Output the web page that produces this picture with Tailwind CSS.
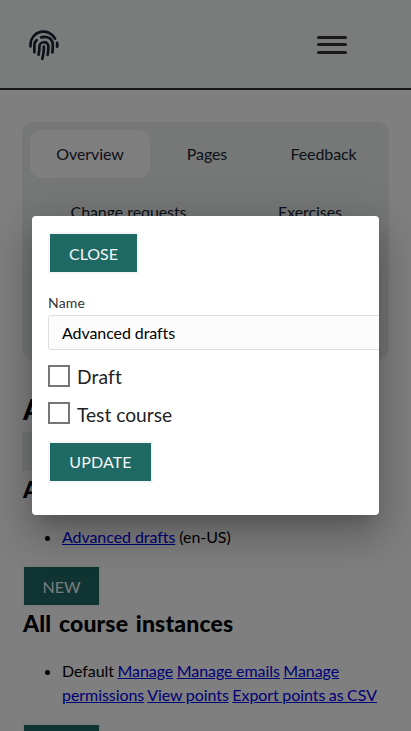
<!DOCTYPE html>
<html lang="en">
<head>
<meta charset="utf-8">
<title>Manage course</title>
<script src="https://cdn.jsdelivr.net/npm/@tailwindcss/browser@4"></script>
</head>
<body class="relative h-[731px] w-[411px] overflow-hidden bg-white font-['Lato',sans-serif] text-base text-black">
<header class="flex h-[90px] items-center justify-between border-b-2 border-[#333] bg-[#f5f6f7] pl-7 pr-16 pt-[2px]">
  <svg class="mt-[2px] h-8 w-8" viewBox="28 30 32 32" fill="none" stroke="#1a2333" stroke-width="2.7" stroke-linecap="round">
    <path d="M30.5 46.5v-2A13 13 0 0 1 55 38.5M57.1 42.8q.4 2 0 3.8M34.4 52.3V45q.1-3 2.3-4.9M41.2 37.4C47.5 35.3 52.8 39 52.8 45.3q0 3.7-.4 7M38.6 54.8q.8-4 .8-8c0-6 9-6.2 9 0q0 4-.7 8M43.9 46.5q.1 6.5-1.6 12.3"/>
  </svg>
  <div class="flex h-[18px] w-[30px] flex-col">
    <span class="h-[3px] rounded-full bg-[#333]"></span>
    <span class="mt-1 h-[3px] rounded-full bg-[#333]"></span>
    <span class="mt-[5px] h-[3px] rounded-full bg-[#333]"></span>
  </div>
</header>
<main class="px-[22px] pt-8">
  <nav class="flex h-[238px] flex-col gap-[10px] rounded-xl bg-[#ebf0ee] p-2 leading-6 tracking-[-0.08px] text-[#1a2333]">
    <div class="flex h-12 gap-[10px]">
      <a class="flex w-[120px] shrink-0 items-center justify-center rounded-xl bg-white">Overview</a>
      <a class="flex w-[94px] shrink-0 items-center justify-center">Pages</a>
      <a class="flex w-[119px] shrink-0 items-center justify-center">Feedback</a>
    </div>
    <div class="flex h-12 gap-[10px]">
      <a class="flex w-[197px] shrink-0 items-center justify-center">Change requests</a>
      <a class="flex w-[146px] shrink-0 items-center justify-center">Exercises</a>
    </div>
  </nav>
  <h1 class="mt-8 h-10 pl-px text-[28px] font-black leading-[34px]">Advanced</h1>
  <div class="h-[39px] w-20 bg-[#ebf0ee]"></div>
  <h2 class="h-[54px] whitespace-nowrap pl-px pt-1 text-[23px] font-black leading-[28px]">All versions</h2>
  <ul class="list-disc pl-10 leading-6 tracking-[-0.07px]">
    <li><a class="text-[#0000ee] underline">Advanced drafts</a> (en-US)</li>
  </ul>
  <button class="mt-4 block h-[42px] w-[79px] border-2 border-[#f5f6f7] bg-[#1f6964] pt-px text-[#f5f6f7]">NEW</button>
  <h2 class="h-[52px] whitespace-nowrap pl-px text-[23px] font-black leading-[32px] tracking-[0.15px] [word-spacing:2px]">All course instances</h2>
  <ul class="list-disc pl-10 leading-6 tracking-[-0.06px] [word-spacing:-0.5px]">
    <li>Default <a class="text-[#0000ee] underline">Manage</a> <a class="text-[#0000ee] underline">Manage emails</a> <a class="text-[#0000ee] underline">Manage permissions</a> <a class="text-[#0000ee] underline">View points</a> <a class="text-[#0000ee] underline">Export points as CSV</a></li>
  </ul>
  <div class="mt-4 h-[42px] w-[79px] border-2 border-[#f5f6f7] bg-[#1f6964]"></div>
</main>
<div class="absolute inset-0 flex items-start bg-black/50 px-8 pt-[216px]">
  <section role="dialog" class="flex h-[299px] w-[347px] flex-col items-start overflow-hidden rounded bg-white p-4 shadow-[0px_11px_15px_-7px_rgba(0,0,0,0.2),0px_24px_38px_3px_rgba(0,0,0,0.14),0px_9px_46px_8px_rgba(0,0,0,0.12)]">
    <button class="h-[42px] w-[91px] shrink-0 border-2 border-[#f5f6f7] bg-[#1f6964] pt-px text-[#f5f6f7]">CLOSE</button>
    <label class="mt-5 h-[21px] text-sm leading-[18px] tracking-[0.2px] text-[#333]">Name</label>
    <input class="h-[35px] w-[400px] shrink-0 rounded-[3px] border border-[#dedede] bg-[#fcfcfc] px-[13px] tracking-[-0.09px]" value="Advanced drafts">
    <label class="mt-[14px] flex h-6 items-center gap-[7px] text-[19.2px] text-[#222]"><span class="mb-px h-[22px] w-[22px] border-2 border-[#767676] bg-white"></span><span class="pt-[2px] tracking-[0.15px]">Draft</span></label>
    <label class="mt-[14px] flex h-6 items-center gap-[7px] text-[19.2px] text-[#222]"><span class="mb-[2px] h-[22px] w-[22px] border-2 border-[#767676] bg-white"></span><span class="pt-[2px]">Test course</span></label>
    <button class="mt-[15px] h-[42px] w-[105px] shrink-0 border-2 border-[#f5f6f7] bg-[#1f6964] tracking-[0.15px] text-[#f5f6f7]">UPDATE</button>
  </section>
</div>
</body>
</html>
